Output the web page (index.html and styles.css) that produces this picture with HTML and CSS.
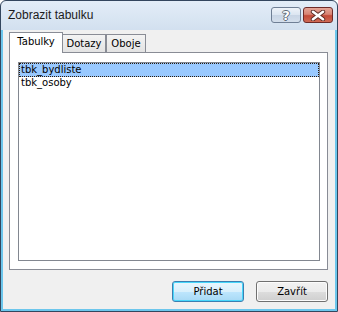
FILE: index.html
```html
<!DOCTYPE html>
<html>
<head>
<meta charset="utf-8">
<link rel="stylesheet" href="styles.css">
</head>
<body>
<div class="window">
  <div class="titlebar">
    <span class="title">Zobrazit tabulku</span>
    <div class="caption-buttons">
      <div class="cbtn help"><span class="q">?</span></div>
      <div class="cbtn close">
        <svg width="16" height="11" viewBox="0 0 16 11">
          <path d="M3 1.8 L13 9.2 M13 1.8 L3 9.2" stroke="#5a2a24" stroke-width="4.4" stroke-linecap="round"/>
          <path d="M3 1.8 L13 9.2 M13 1.8 L3 9.2" stroke="#ffffff" stroke-width="2.6" stroke-linecap="round"/>
        </svg>
      </div>
    </div>
  </div>
  <div class="client">
    <div class="tabs">
      <div class="tab active">Tabulky</div>
      <div class="tab t2">Dotazy</div>
      <div class="tab t3">Oboje</div>
    </div>
    <div class="panel">
      <div class="listbox">
        <div class="item selected">tbk_bydliste</div>
        <div class="item">tbk_osoby</div>
      </div>
    </div>
    <div class="buttons">
      <button class="btn default">Přidat</button>
      <button class="btn">Zavřít</button>
    </div>
  </div>
</div>
</body>
</html>
```

FILE: styles.css
```css
html, body {
  margin: 0;
  padding: 0;
}
body {
  width: 338px;
  height: 312px;
  overflow: hidden;
  background: #ffffff;
}
.window {
  box-sizing: border-box;
  width: 338px;
  height: 312px;
  border: 1px solid #33465e;
  border-radius: 6px 6px 0 0;
  background: linear-gradient(to bottom, #e3edf8 0, #d2e0ef 29px, #6cc6ec 29px, #6cc6ec 100%);
  padding: 0 2px 2px 2px;
  display: flex;
  flex-direction: column;
}
.titlebar {
  height: 29px;
  display: flex;
  align-items: flex-start;
  flex: none;
}
.title {
  font-family: "Liberation Sans", Arial, sans-serif;
  font-size: 12px;
  color: #1b1b1b;
  padding-left: 5px;
  padding-top: 7px;
  line-height: 14px;
}
.caption-buttons {
  margin-left: auto;
  margin-right: 2px;
  margin-top: 6px;
  display: flex;
  gap: 2px;
}
.cbtn {
  box-sizing: border-box;
  width: 30px;
  height: 16px;
  border-radius: 3px;
  display: flex;
  align-items: center;
  justify-content: center;
}
.help {
  border: 1px solid #6f7f95;
  background: linear-gradient(to bottom, #eef3f9 0, #dbe5f1 50%, #c8d5e5 51%, #d4dfec 100%);
}
.q {
  font-family: "DejaVu Sans", sans-serif;
  font-weight: bold;
  font-size: 13px;
  line-height: 13px;
  color: #ffffff;
  text-shadow: 1px 0 0 #5e6a78, -1px 0 0 #5e6a78, 0 1px 0 #5e6a78, 0 -1px 0 #5e6a78;
}
.close {
  border: 1px solid #6d2a28;
  background: linear-gradient(to bottom, #e4a597 0, #d88474 45%, #c34a38 55%, #cf6a55 100%);
}
.close svg {
  display: block;
}
.client {
  flex: 1;
  background: #f0f0f0;
  padding: 2px 7px 7px 6px;
  display: flex;
  flex-direction: column;
  font-family: "DejaVu Sans", Tahoma, sans-serif;
  font-size: 10px;
  color: #000;
}
.tabs {
  display: flex;
  align-items: flex-end;
  height: 20px;
  flex: none;
}
.tab {
  box-sizing: border-box;
  border: 1px solid #898c95;
  border-bottom: none;
  height: 18px;
  line-height: 17px;
  text-align: center;
  background: linear-gradient(to bottom, #f3f3f3, #e3e3e3);
}
.tab.active {
  position: relative;
  z-index: 1;
  width: 54px;
  height: 21px;
  margin-bottom: -1px;
  background: #ffffff;
  line-height: 18px;
  padding-bottom: 2px;
}
.tab.t2 {
  width: 44px;
  margin-left: -1px;
}
.tab.t3 {
  width: 40px;
}
.panel {
  box-sizing: border-box;
  height: 218px;
  border: 1px solid #898c95;
  background: #ffffff;
  padding: 9px 7px 8px 8px;
  display: flex;
}
.listbox {
  flex: 1;
  border: 1px solid #828790;
  background: #ffffff;
  padding: 0;
}
.item {
  box-sizing: border-box;
  height: 13px;
  line-height: 12px;
  padding-left: 2px;
  white-space: nowrap;
}
.item.selected {
  background: #99c9ff;
  border: 1px dotted #2a1a0a;
  padding-left: 1px;
  line-height: 11px;
  height: 14px;
}
.buttons {
  display: flex;
  justify-content: flex-end;
  gap: 12px;
  margin-top: 11px;
}
.btn {
  box-sizing: border-box;
  width: 72px;
  height: 21px;
  border: 1px solid #707070;
  border-radius: 3px;
  background: linear-gradient(to bottom, #f2f2f2 0, #ebebeb 50%, #dddddd 51%, #cfcfcf 100%);
  font-family: "DejaVu Sans", Tahoma, sans-serif;
  font-size: 10px;
  color: #000;
  padding: 0;
  box-shadow: inset 0 0 0 1px #fcfcfc;
}
.btn.default {
  border-color: #3c7fb1;
  background: linear-gradient(to bottom, #eaf6fd 0, #d9f0fc 50%, #bee6fd 51%, #a7d9f5 100%);
  box-shadow: inset 0 0 0 1px #48d7fb;
}
```
